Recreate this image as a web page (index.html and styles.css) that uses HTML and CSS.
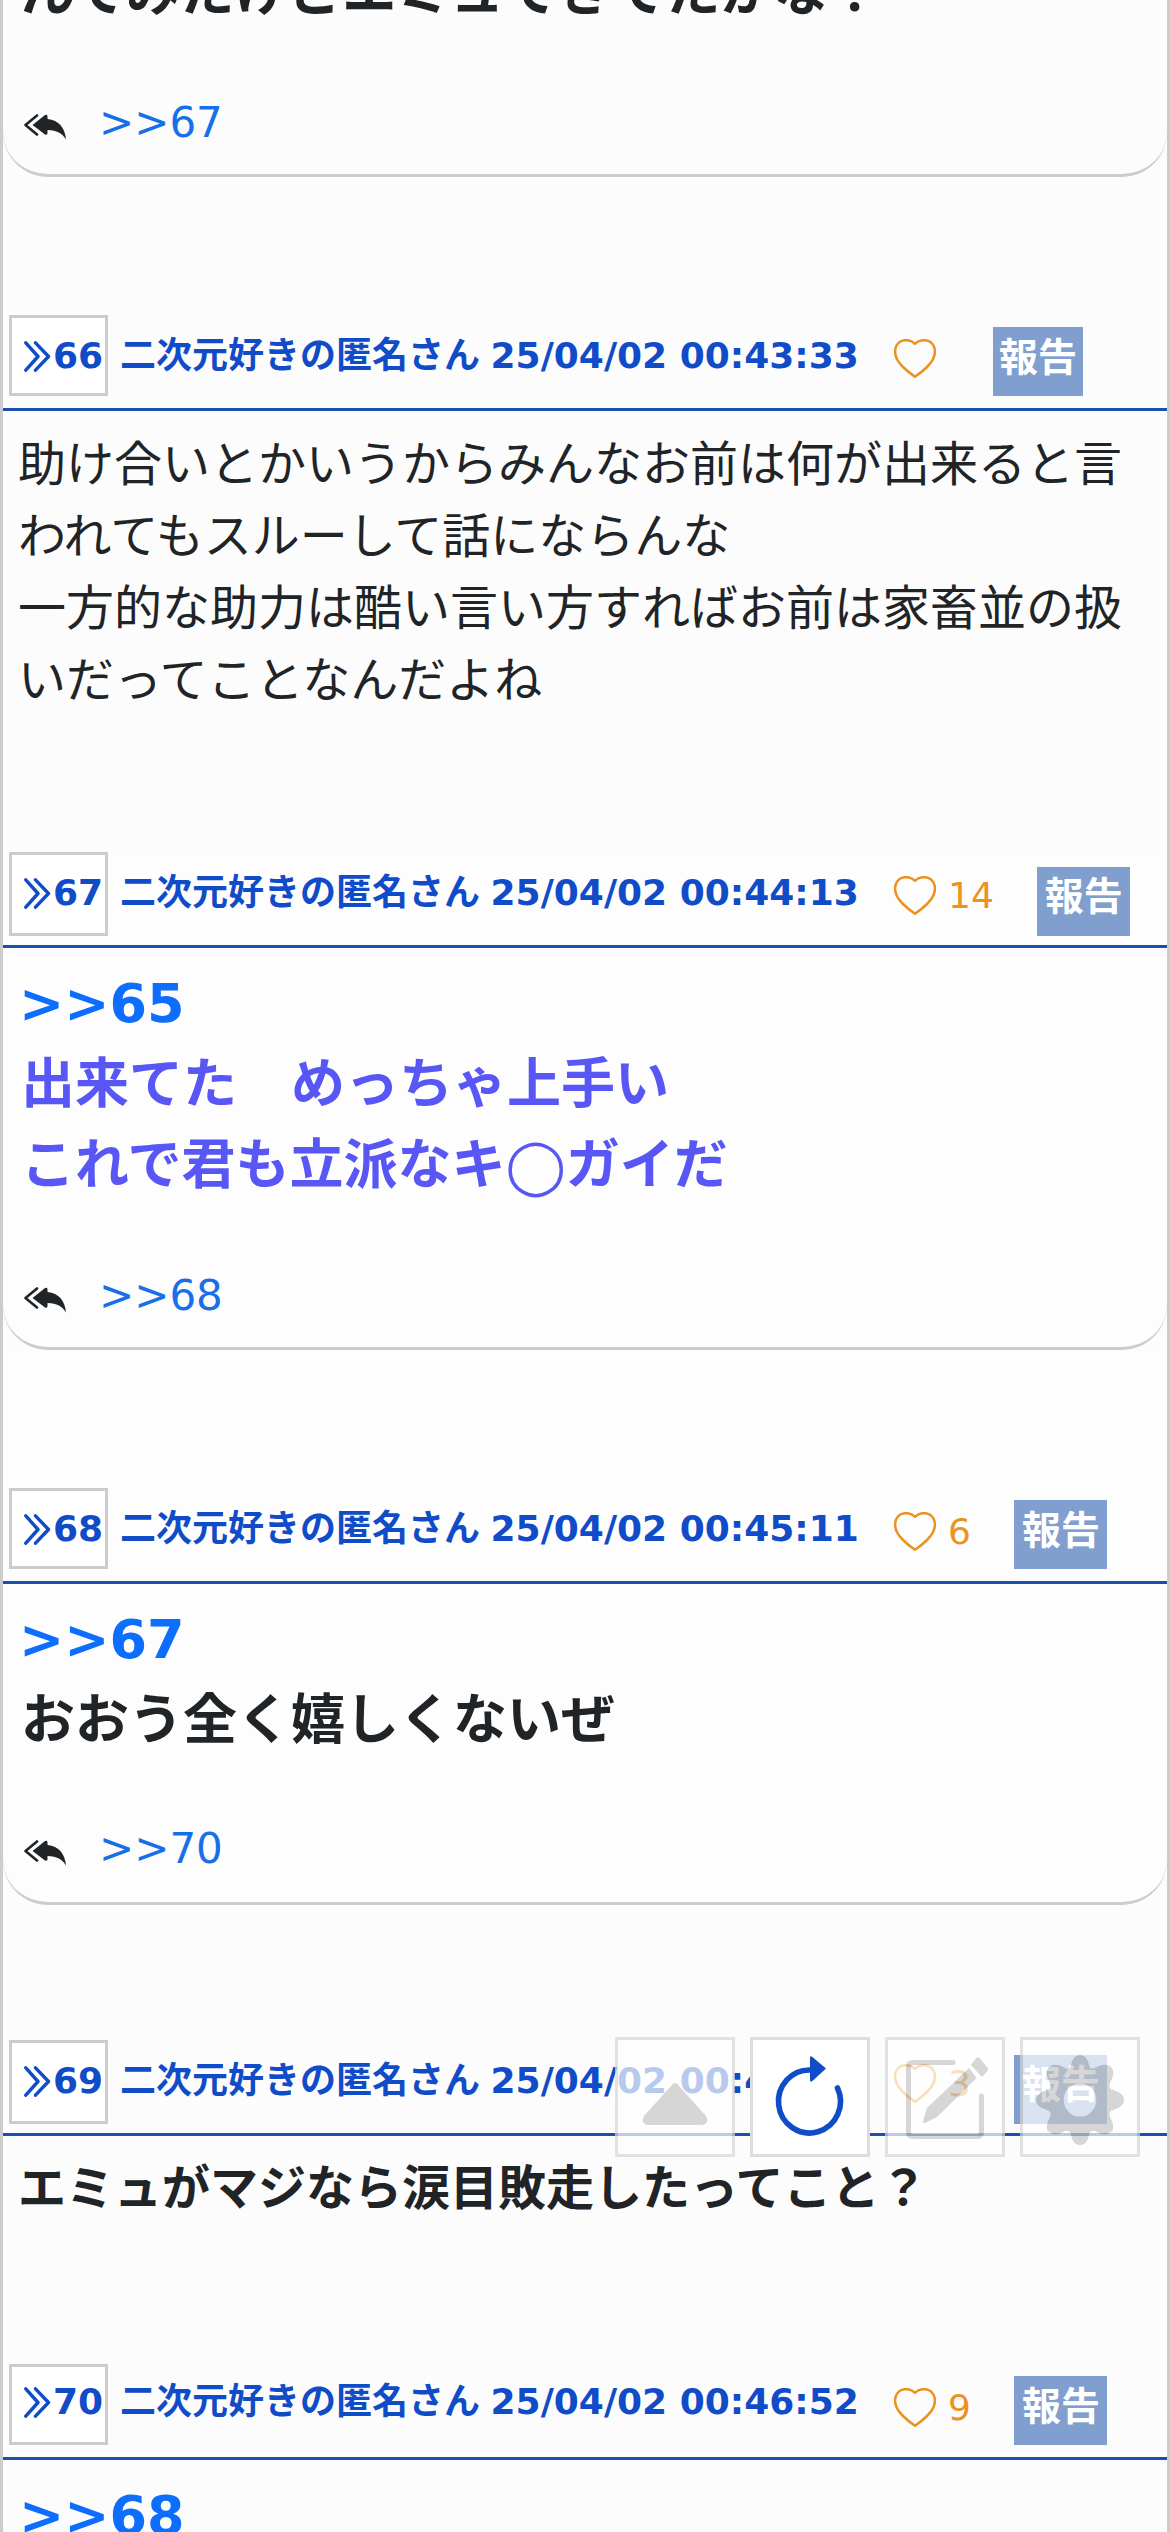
FILE: index.html
```html
<!DOCTYPE html>
<html lang="ja">
<head>
<meta charset="utf-8">
<title>スレッド</title>
<link rel="stylesheet" href="styles.css">
</head>
<body>
<svg class="defs" aria-hidden="true">
  <symbol id="chev" viewBox="0 0 27 31"><path d="M1.800 1.800 L14 15.500 L1.800 29.200 M11.500 1.800 L24.500 15.500 L11.500 29.200" fill="none" stroke="currentColor" stroke-width="3.400" stroke-linecap="round" stroke-linejoin="round"/></symbol>
  <symbol id="heart" viewBox="0 0 42 39"><path d="M21 4.800 C15 -1 5.500 .5 2.300 7 C-.8 14 2.500 21.500 9 28 C13 32 17 35 21 37.800 C25 35 29 32 33 28 C39.500 21.500 42.800 14 39.700 7 C36.500 .5 27 -1 21 4.800 Z" fill="none" stroke="currentColor" stroke-width="2.500" stroke-linejoin="round"/></symbol>
  <symbol id="reply" viewBox="0 0 42 26"><path d="M13 1.500 L1.500 11 L13 20.500" fill="none" stroke="currentColor" stroke-width="2.600" stroke-linecap="round" stroke-linejoin="round"/><path d="M8.500 11 L21 1 Q23 0 23.500 2 V5 C35 6 41 14 42 25.500 C38 19 33 16.500 23.500 16 V19 Q23.500 21.500 21 20.500 Z" fill="currentColor"/></symbol>
</svg>
<main class="thread">
  <article class="post post-65">
    <div class="text strong">んでみたけどエミュできてたかな？</div>
    <div class="replies"><svg class="reply"><use href="#reply"/></svg><a>&gt;&gt;67</a></div>
  </article>
  <article class="post post-66">
    <header class="head"><a class="num"><svg class="chev"><use href="#chev"/></svg>66</a><span class="name">二次元好きの匿名さん <span class="date">25/04/02 00:43:33</span></span><svg class="heart"><use href="#heart"/></svg><span class="count"></span><span class="report">報告</span></header>
    <div class="text plain">助け合いとかいうからみんなお前は何が出来ると言われてもスルーして話にならんな<br>一方的な助力は酷い言い方すればお前は家畜並の扱いだってことなんだよね</div>
  </article>
  <article class="post post-67">
    <header class="head"><a class="num tall"><svg class="chev"><use href="#chev"/></svg>67</a><span class="name">二次元好きの匿名さん <span class="date">25/04/02 00:44:13</span></span><svg class="heart"><use href="#heart"/></svg><span class="count">14</span><span class="report low">報告</span></header>
    <div class="text strong violet"><a>&gt;&gt;65</a><br>出来てた　めっちゃ上手い<br>これで君も立派なキ<span class="ring">◯</span>ガイだ</div>
    <div class="replies"><svg class="reply"><use href="#reply"/></svg><a>&gt;&gt;68</a></div>
  </article>
  <article class="post post-68">
    <header class="head"><a class="num"><svg class="chev"><use href="#chev"/></svg>68</a><span class="name">二次元好きの匿名さん <span class="date">25/04/02 00:45:11</span></span><svg class="heart"><use href="#heart"/></svg><span class="count">6</span><span class="report">報告</span></header>
    <div class="text strong"><a>&gt;&gt;67</a><br>おおう全く嬉しくないぜ</div>
    <div class="replies"><svg class="reply"><use href="#reply"/></svg><a>&gt;&gt;70</a></div>
  </article>
  <article class="post post-69">
    <header class="head"><a class="num tall"><svg class="chev"><use href="#chev"/></svg>69</a><span class="name">二次元好きの匿名さん <span class="date">25/04/02 00:45:42</span></span><svg class="heart"><use href="#heart"/></svg><span class="count">3</span><span class="report low">報告</span></header>
    <div class="text medium">エミュがマジなら涙目敗走したってこと？</div>
  </article>
  <article class="post post-70">
    <header class="head raised"><a class="num"><svg class="chev"><use href="#chev"/></svg>70</a><span class="name">二次元好きの匿名さん <span class="date">25/04/02 00:46:52</span></span><svg class="heart"><use href="#heart"/></svg><span class="count">9</span><span class="report">報告</span></header>
    <div class="text strong"><a>&gt;&gt;68</a></div>
  </article>
</main>
<nav class="tools">
  <button class="tool faded"><svg viewBox="0 0 114 114"><path d="M53 46 Q57 40 61 46 L88 76 Q92 84 84 85 H30 Q22 84 26 76 Z" fill="currentColor"/></svg></button>
  <button class="tool active"><svg viewBox="0 0 114 114"><path d="M58 30 A31 31.500 0 1 0 84.500 48" fill="none" stroke="currentColor" stroke-width="5.600" stroke-linecap="round"/><path d="M57 18 Q57 15 60 17.500 L73 28.500 L60 40.500 Q57 43 57 40 Z" fill="currentColor"/></svg></button>
  <button class="tool faded"><svg viewBox="0 0 114 114"><path d="M65 22.500 H25 Q20.500 22.500 20.500 27 V92 Q20.500 96.500 25 96.500 H89 Q93.500 96.500 93.500 92 V56" fill="none" stroke="currentColor" stroke-width="5" stroke-linecap="round"/><path d="M34.500 82.500 L39 68 L81 28 L88.500 38 L49 77 L37 83 Z M83 25 L88 18.500 Q90 16 92 18.500 L99 27 Q101 29.500 99 31.500 L94 37 Z" fill="currentColor"/></svg></button>
  <button class="tool faded"><svg viewBox="0 0 114 114"><path fill="currentColor" fill-rule="evenodd" d="M57 15 Q64 15 66 25 Q67 30 72 28 Q82 22 88 27 Q93 32 87 43 Q85 49 90 50 Q101 53 101 60 Q101 67 90 70 Q85 71 87 77 Q93 88 88 92 Q82 97 72 91 Q67 90 66 95 Q64 105 57 105 Q50 105 48 95 Q47 90 42 91 Q32 97 26 92 Q21 88 27 77 Q29 71 24 70 Q13 67 13 60 Q13 53 24 50 Q29 49 27 43 Q21 32 26 27 Q32 22 42 28 Q47 30 48 25 Q50 15 57 15 Z M57 43.500 A16.300 16.500 0 1 0 57 76.500 A16.300 16.500 0 1 0 57 43.500 Z"/></svg></button>
</nav>
</body>
</html>
```
FILE: styles.css
```css
* { box-sizing: border-box; }
html { height: 2532px; overflow: hidden; }
body {
  position: relative;
  height: 2532px;
  margin: 0;
  overflow: hidden;
  background: #fcfcfc;
  color: #212427;
  font-family: "DejaVu Sans", "Noto Sans CJK JP", sans-serif;
}
.defs { display: none; }
svg { display: block; flex: none; }
.thread {
  height: 2532px;
  overflow: hidden;
  border: solid #ccc;
  border-width: 0 3px;
}
.post { display: flex; flex-direction: column; }
.post-65 { height: 177px; }
.post-66 { height: 675px; padding-top: 138px; }
.post-67 { height: 498px; }
.post-68 { height: 555px; padding-top: 138px; }
.post-69 { height: 459px; padding-top: 135px; }
.post-70 { height: 171px; }
.post-65, .post-67, .post-68 {
  border-bottom: 3px solid #ccc;
  border-radius: 0 0 45px 45px;
}
.post-67, .post-68 { background: #fdfdfd; }
.head {
  display: flex;
  flex: none;
  align-items: flex-start;
  height: 96px;
  padding-left: 6px;
  border-bottom: 3px solid #1a4fae;
  color: #114cc8;
  font-size: 36px;
  font-weight: bold;
  line-height: 54px;
  white-space: nowrap;
}
.num {
  display: flex;
  width: 99px;
  height: 81px;
  padding: 11px 0 0 12px;
  border: 3px solid #ccc;
  background: #fff;
}
.num.tall { height: 84px; }
.chev { width: 27px; height: 31px; margin: 12px 2px 0 0; }
.name { width: 774px; padding: 14px 0 0 12px; }
.date { margin-left: -2px; }
.raised .num { padding-top: 8px; }
.raised .name { padding-top: 11px; }
.heart { width: 42px; height: 39px; margin: 24px 0 0 12px; color: #eb921f; }
.count {
  margin: 17px 43.5px 0 12px;
  color: #eb921f;
  font-weight: normal;
}
.count:empty { margin-right: 45px; }
.report {
  width: 93px;
  height: 69px;
  margin-top: 12px;
  background: #809fcf;
  color: #fff;
  font-size: 39px;
  line-height: 62px;
  text-align: center;
}
.report.low { margin-top: 15px; line-height: 60px; }
.count:empty + .report { width: 90px; }
.text { flex: none; }
.plain { padding: 17px 0 0 15px; font-size: 48px; line-height: 72px; }
.medium { padding: 16px 0 0 15px; font-size: 48px; font-weight: bold; line-height: 72px; }
.strong { padding: 15px 0 0 18px; font-size: 54px; font-weight: bold; line-height: 81px; }
.post-65 .strong { margin-top: -48px; padding-top: 0; }
.strong a { margin-left: -2px; color: #0d6efd; }
.violet { color: #5856f5; }
.ring { font-family: "DejaVu Sans", sans-serif; font-weight: normal; }
.replies {
  display: flex;
  align-items: flex-start;
  margin-top: auto;
  height: 81px;
  padding-left: 21px;
  font-size: 42px;
  line-height: 60px;
}
.post-68 .replies { height: 83px; }
.replies a { margin-left: 33px; color: #1870e8; }
.reply { width: 42px; height: 26px; margin-top: 21px; }
.tools {
  position: absolute;
  top: 2037px;
  left: 615px;
  display: flex;
  gap: 15px;
}
.tool {
  width: 120px;
  height: 120px;
  padding: 0;
  border: 3px solid #ddd;
  background: #fff;
  color: #114cc8;
}
.faded { border-color: #d6d6d6; color: #c6c6c6; opacity: .7; }
```
